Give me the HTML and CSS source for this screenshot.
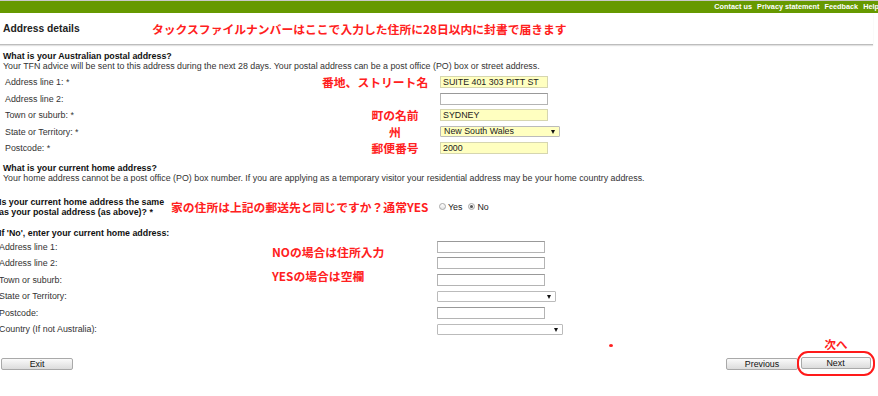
FILE: index.html
```html
<!DOCTYPE html>
<html lang="en">
<head>
  <meta charset="UTF-8" />
  <meta name="viewport" content="width=device-width, initial-scale=1" />
  <title>Address details</title>
  <link rel="stylesheet" href="styles.css">
</head>
<body>

  <div class="topbar">
    <nav class="toplinks">
      <a href="#">Contact us</a>
      <a href="#">Privacy statement</a>
      <a href="#">Feedback</a>
      <a href="#">Help</a>
    </nav>
  </div>

  <div class="page-head">
    <h1>Address details</h1>
    <span class="note">タックスファイルナンバーはここで入力した住所に28日以内に封書で届きます</span>
  </div>

  <!-- postal address -->
  <div class="section">
    <h2>What is your Australian postal address?</h2>
    <p class="desc">Your TFN advice will be sent to this address during the next 28 days. Your postal address can be a post office (PO) box or street address.</p>

    <div class="rows rows-postal">
      <label class="lbl">Address line 1: *</label>
      <span class="note note-wide">番地、ストリート名</span>
      <input class="fld filled" type="text" value="SUITE 401 303 PITT ST">

      <label class="lbl">Address line 2:</label>
      <span class="note"></span>
      <input class="fld" type="text">

      <label class="lbl">Town or suburb: *</label>
      <span class="note">町の名前</span>
      <input class="fld filled" type="text" value="SYDNEY">

      <label class="lbl">State or Territory: *</label>
      <span class="note">州</span>
      <span class="fld select-wrap">
        <select class="select filled">
          <option>New South Wales</option>
        </select>
      </span>

      <label class="lbl">Postcode: *</label>
      <span class="note">郵便番号</span>
      <input class="fld filled" type="text" value="2000">
    </div>
  </div>

  <!-- home address -->
  <div class="section section-home">
    <h2>What is your current home address?</h2>
    <p class="desc">Your home address cannot be a post office (PO) box number. If you are applying as a temporary visitor your residential address may be your home country address.</p>

    <div class="question">
      <div class="q-label">Is your current home address the same<br>as your postal address (as above)? *</div>
      <span class="note">家の住所は上記の郵送先と同じですか？通常YES</span>
      <div class="radios">
        <label class="radio"><input type="radio" name="same"> Yes</label>
        <label class="radio"><input type="radio" name="same" checked> No</label>
      </div>
    </div>

    <h2 class="sub">If 'No', enter your current home address:</h2>

    <div class="rows rows-home">
      <div class="notes">
        <span class="note">NOの場合は住所入力</span>
        <span class="note">YESの場合は空欄</span>
      </div>

      <label class="lbl">Address line 1:</label>
      <input class="fld" type="text">

      <label class="lbl">Address line 2:</label>
      <input class="fld" type="text">

      <label class="lbl">Town or suburb:</label>
      <input class="fld" type="text">

      <label class="lbl">State or Territory:</label>
      <span class="fld select-wrap">
        <select class="select"><option></option></select>
      </span>

      <label class="lbl">Postcode:</label>
      <input class="fld" type="text">

      <label class="lbl">Country (If not Australia):</label>
      <span class="fld select-wrap select-wide">
        <select class="select"><option></option></select>
      </span>
    </div>
  </div>

  <div class="actions">
    <button class="btn">Exit</button>
    <span class="dot"></span>
    <div class="nav-btns">
      <button class="btn">Previous</button>
      <div class="next-wrap">
        <span class="note">次へ</span>
        <div class="circle">
          <button class="btn">Next</button>
        </div>
      </div>
    </div>
  </div>

</body>
</html>
```

FILE: styles.css
```css
* {
  margin: 0;
  padding: 0;
  box-sizing: border-box;
}

body {
  font-family: "Liberation Sans", Arial, "Noto Sans CJK JP", sans-serif;
  font-size: 8.85px;
  color: #333;
  background: #fff;
  width: 878px;
  overflow: hidden;
}

/* top green strip */
.topbar {
  border-top: 1px solid #c9c9c9;
  background: #669900;
  height: 13px;
}

.toplinks {
  display: flex;
  justify-content: flex-end;
  gap: 5px;
  line-height: 12px;
  margin-right: -1px;
}

.toplinks a {
  color: #fff;
  font-size: 7.3px;
  font-weight: bold;
  text-decoration: none;
  white-space: nowrap;
}

/* red hand-written notes */
.note {
  color: #ff2020;
  font-weight: bold;
  font-size: 11.8px;
  font-family: "Noto Sans CJK JP", sans-serif;
  white-space: nowrap;
  line-height: 14px;
}

.page-head {
  display: flex;
  align-items: center;
  height: 32px;
  margin-right: 5px;
  border-bottom: 1px solid #bdbdbd;
  box-shadow: 0 1px 1px #e2e2e2;
}

h1 {
  width: 152px;
  padding-left: 3px;
  font-size: 10.3px;
  color: #222;
}

.section {
  padding-left: 3px;
}

h2 {
  font-size: 8.85px;
  font-weight: bold;
  color: #111;
  line-height: 10px;
}

.section > h2:first-child {
  margin-top: 6px;
}

.desc {
  line-height: 10px;
}

.rows {
  display: grid;
  grid-auto-rows: 16.5px;
  align-items: center;
}

.rows-postal {
  margin-top: 3px;
  margin-left: 2px;
  grid-template-columns: 315px 120px auto;
}

.rows-postal .note {
  padding-left: 30px;
  text-align: center;
}

.rows-postal .note-wide {
  padding-left: 2px;
  text-align: left;
}

.lbl {
  grid-column: 1;
  white-space: nowrap;
}

.fld {
  grid-column: 3;
}

input[type="text"] {
  width: 108px;
  height: 12px;
  border: 1px solid #b4b4b4;
  border-top-color: #999;
  background: #fff;
  font-family: inherit;
  font-size: 8.85px;
  color: #222;
  padding: 0 2px;
  outline: none;
}

input.filled {
  background: #ffffc0;
  border-color: #d6d6b0;
}

.select-wrap {
  position: relative;
  width: 120px;
  height: 11px;
}

.select-wrap::after {
  content: "";
  position: absolute;
  right: 5px;
  top: 4px;
  border-left: 2px solid transparent;
  border-right: 2px solid transparent;
  border-top: 4px solid #111;
}

.select {
  appearance: none;
  -webkit-appearance: none;
  display: block;
  width: 100%;
  height: 11px;
  border: 1px solid #bbb;
  border-radius: 1px;
  background: #fff;
  font-family: inherit;
  font-size: 8.85px;
  color: #222;
  padding: 0 3px;
  line-height: 9px;
}

.select.filled {
  background: #ffffc0;
}

/* second block is shifted a little to the left, as in the shot */
.section-home {
  margin-top: 6px;
}

.section-home .question,
.section-home .sub,
.section-home .rows-home {
  margin-left: -4px;
}

.question {
  display: grid;
  grid-template-columns: 172px 268px auto;
  align-items: center;
  margin-top: 14px;
}

.q-label {
  white-space: nowrap;
  font-weight: bold;
  color: #111;
  line-height: 10px;
}

.radios {
  display: flex;
  gap: 6px;
  color: #222;
}

.radio {
  display: flex;
  align-items: center;
  gap: 2px;
}

.radio input {
  appearance: none;
  -webkit-appearance: none;
  width: 7px;
  height: 7px;
  border: 1px solid #a8a8a8;
  border-radius: 50%;
  background: linear-gradient(#fff, #e4e4e4);
  position: relative;
}

.radio input:checked::after {
  content: "";
  position: absolute;
  left: 1px;
  top: 1px;
  width: 3px;
  height: 3px;
  border-radius: 50%;
  background: #555;
}

.sub {
  margin-top: 11px;
}

.rows-home {
  margin-top: 1px;
  grid-template-columns: 273px 165px auto;
}

.notes {
  grid-column: 2;
  grid-row: 1 / span 4;
  align-self: start;
  display: flex;
  flex-direction: column;
  gap: 10px;
  padding-top: 6px;
}

.select-wide {
  width: 126px;
}

.rows-home .select-wrap:not(.select-wide) {
  width: 119px;
}

/* bottom buttons */
.actions {
  position: relative;
  display: flex;
  justify-content: space-between;
  align-items: flex-end;
  padding: 0 3px 0 1px;
}

.btn {
  width: 72px;
  height: 12px;
  border: 1px solid #a9a9a9;
  border-radius: 2px;
  background: linear-gradient(#fafafa, #dcdcdc);
  font-family: inherit;
  font-size: 8.85px;
  color: #111;
  line-height: 10px;
}

.actions > .btn {
  margin-bottom: 6px;
}

.dot {
  position: absolute;
  left: 609px;
  top: 6px;
  width: 4px;
  height: 3px;
  border-radius: 50%;
  background: #ff2020;
}

.nav-btns {
  display: flex;
  align-items: flex-end;
}

.nav-btns > .btn {
  margin-bottom: 6px;
}

.next-wrap {
  display: flex;
  flex-direction: column;
  align-items: center;
  margin-left: -1px;
}

.next-wrap .note {
  line-height: 12px;
  font-size: 11.5px;
}

.circle {
  margin-top: 1px;
  border: 2.5px solid #ff1a1a;
  border-radius: 11px;
  padding: 4.5px 2.5px 4.5px 1.5px;
}

.circle .btn {
  width: 70px;
}
```
